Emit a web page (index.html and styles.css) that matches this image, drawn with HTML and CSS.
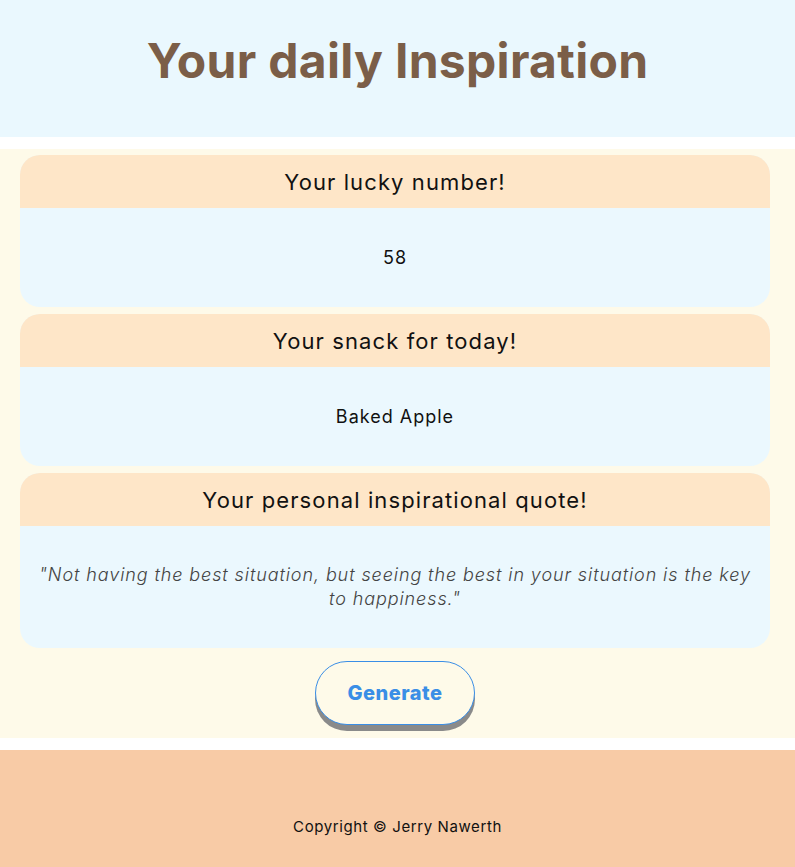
FILE: index.html
```html
<!DOCTYPE html>
<html lang="en">
<head>
<meta charset="utf-8">
<title>Your daily Inspiration</title>
<link rel="stylesheet" href="styles.css">
</head>
<body>
<header class="top">
  <h1 class="title">Your daily Inspiration</h1>
</header>
<main class="main">
  <section class="card">
    <h2 class="card-head">Your lucky number!</h2>
    <div class="card-body"><p class="value">58</p></div>
  </section>
  <section class="card">
    <h2 class="card-head">Your snack for today!</h2>
    <div class="card-body"><p class="value">Baked Apple</p></div>
  </section>
  <section class="card">
    <h2 class="card-head">Your personal inspirational quote!</h2>
    <div class="card-body quote-body"><p class="quote">"Not having the best situation, but seeing the best in your situation is the key to happiness."</p></div>
  </section>
  <div class="actions">
    <button class="btn" type="button">Generate</button>
  </div>
</main>
<footer class="foot">
  <p class="copy">Copyright © Jerry Nawerth</p>
</footer>
</body>
</html>
```
FILE: styles.css
```css
* { box-sizing: border-box; }
body {
  margin: 0;
  background: #ffffff;
  font-family: Inter, "Open Sans", sans-serif;
  color: #111;
}
.top {
  background: #eaf8fe;
  height: 137px;
  display: flex;
  align-items: center;
  justify-content: center;
  margin-bottom: 12px;
}
.title {
  margin: 0 0 16px;
  font-size: 48px;
  font-weight: 700;
  color: #7b5e48;
  letter-spacing: 0.3px;
}
.main {
  background: #fefae9;
  padding: 6px 25px 0 20px;
  display: flex;
  flex-direction: column;
  gap: 7px;
  margin-bottom: 12px;
}
.card {
  border-radius: 20px;
  overflow: hidden;
  background: #ebf8fe;
}
.card-head {
  margin: 0;
  background: #fee6c8;
  height: 53px;
  display: flex;
  align-items: center;
  justify-content: center;
  font-size: 22px;
  font-weight: 400;
  letter-spacing: 1.1px;
  color: #111;
}
.card-body {
  height: 99px;
  display: flex;
  align-items: center;
  justify-content: center;
  padding: 0 16px;
}
.quote-body { height: 122px; }
.value {
  margin: 0;
  font-size: 18px;
  letter-spacing: 1px;
  color: #111;
}
.quote {
  margin: 0;
  font-size: 18px;
  font-style: italic;
  font-weight: 300;
  line-height: 24px;
  letter-spacing: 0.9px;
  color: #444;
  text-align: center;
}
.actions {
  display: flex;
  justify-content: center;
  padding: 6px 0 13px;
}
.btn {
  width: 160px;
  height: 64px;
  border: 1px solid #3a8ee6;
  border-radius: 32px;
  background: #fefae9;
  color: #3a8ee6;
  font-family: inherit;
  font-size: 20px;
  font-weight: 800;
  letter-spacing: 0.5px;
  box-shadow: 0 6px 0 #8a8a8a;
}
.foot {
  background: #f8cba6;
  height: 118px;
  display: flex;
  align-items: flex-end;
  justify-content: center;
  padding-bottom: 32px;
}
.copy {
  margin: 0;
  font-size: 15px;
  letter-spacing: 0.6px;
  color: #111;
}
```
